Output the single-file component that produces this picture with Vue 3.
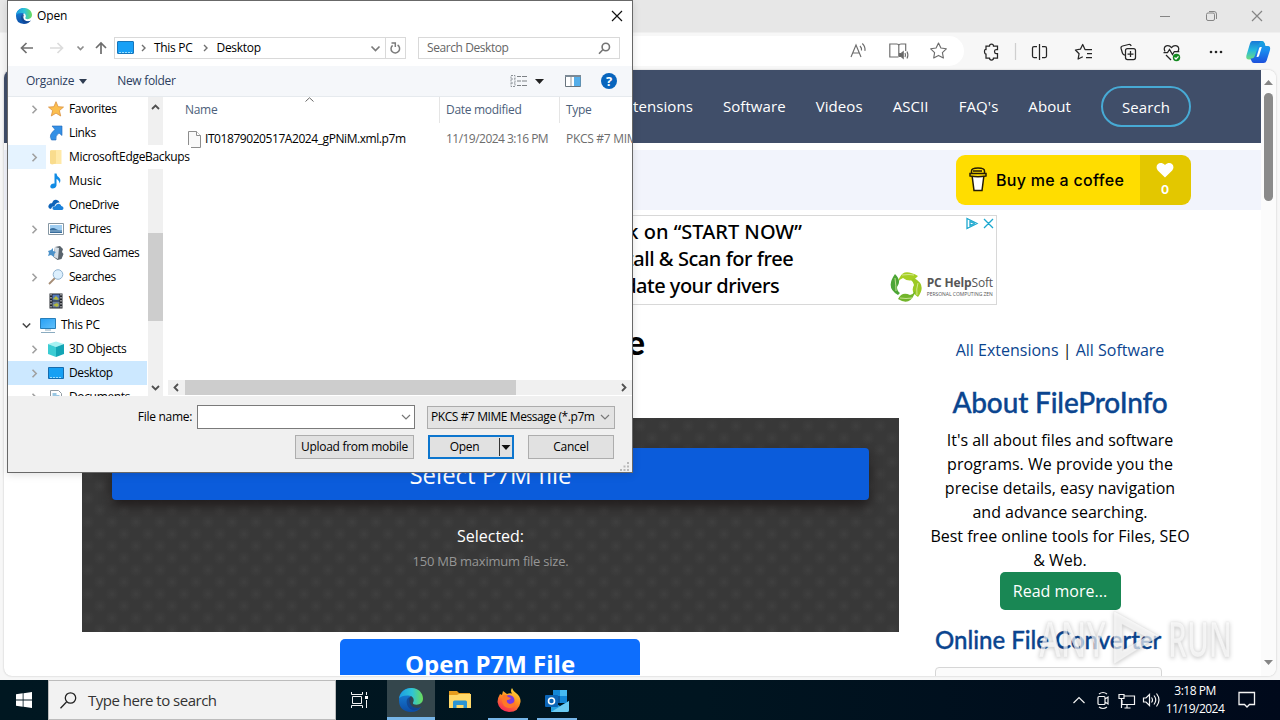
<script setup>
const tree = [
  { label: 'Favorites', icon: 'star', arrow: true },
  { label: 'Links', icon: 'link' },
  { label: 'MicrosoftEdgeBackups', icon: 'folder', arrow: true, state: 'hover' },
  { label: 'Music', icon: 'music', state: 'loose' },
  { label: 'OneDrive', icon: 'cloud' },
  { label: 'Pictures', icon: 'picture', arrow: true },
  { label: 'Saved Games', icon: 'games', state: 'tight' },
  { label: 'Searches', icon: 'search', arrow: true, state: 'tight' },
  { label: 'Videos', icon: 'video' },
  { label: 'This PC', icon: 'pc', arrow: true, state: 'root' },
  { label: '3D Objects', icon: 'cube', arrow: true },
  { label: 'Desktop', icon: 'desktop', arrow: true, state: 'selected' },
  { label: 'Documents', icon: 'doc', arrow: true },
]
const nav = ['Extensions', 'Software', 'Videos', 'ASCII', "FAQ's", 'About']
</script>

<template>
  <div class="screen">
    <svg class="defs" width="0" height="0">
      <defs>
        <linearGradient id="edgeA" x1="0" y1="0" x2="1" y2="0"><stop offset="0" stop-color="#1b9de2" /><stop offset=".55" stop-color="#2fc4d6" /><stop offset="1" stop-color="#6bdc58" /></linearGradient>
        <linearGradient id="edgeB" x1="0" y1="0" x2="0" y2="1"><stop offset="0" stop-color="#1a8ae0" /><stop offset="1" stop-color="#0c4da6" /></linearGradient>
        <linearGradient id="copA" x1="0" y1="0" x2="0" y2="1"><stop offset="0" stop-color="#1779d8" /><stop offset=".5" stop-color="#24b8dd" /><stop offset="1" stop-color="#6fdc80" /></linearGradient>
        <linearGradient id="copB" x1="0" y1="0" x2="0" y2="1"><stop offset="0" stop-color="#15a4d8" /><stop offset=".4" stop-color="#1a8ff0" /><stop offset="1" stop-color="#1c50dc" /></linearGradient>
        <linearGradient id="fox" x1=".8" y1="0" x2=".3" y2="1"><stop offset="0" stop-color="#ffe23e" /><stop offset=".5" stop-color="#ff8c1e" /><stop offset="1" stop-color="#f5245c" /></linearGradient>
        <linearGradient id="screenBlue" x1="0" y1="0" x2="1" y2="1"><stop offset="0" stop-color="#27a0f5" /><stop offset="1" stop-color="#62c0fa" /></linearGradient>
        <symbol id="edge" viewBox="0 0 24 24">
          <path d="M0 12C0 4 6 0 12 0v8q-3 2-1.500 7 2 5 7.500 5 3 0 4.500-1.500Q19 24 12 24 0 23.500 0 12Z" fill="url(#edgeB)" />
          <path d="M0 10.500C1.500 3.500 7-.2 13 .1 19.500.5 24 5.200 24 10.500c0 4-3 6.200-6.500 6.200-3 0-4.200-1.200-3.300-2.500C15.500 12 14.500 8 9.500 7.600 5 7.300 1.500 8.500 0 10.500Z" fill="url(#edgeA)" />
          <path d="M9 10c-3 3-1 11 5.500 12.300 3.500.3 6-1.300 7.600-3.300-3.600 1.700-8.600.9-10.200-2.300C10.800 14.500 11 12 12.500 10.500 11.500 9 10 9 9 10Z" fill="#123f86" opacity=".7" />
        </symbol>
      </defs>
    </svg>

    <div class="browser">
      <div class="titlebar">
        <svg width="122" height="32" viewBox="0 0 122 32" fill="none" stroke="#858585">
          <path d="M4 16.500h10M50.500 14.500q0-1.500 1.500-1.500h5q1.500 0 1.500 1.500v4.500q0 1.500-1.500 1.500h-5q-1.500 0-1.500-1.500zM53 11.500h5q2.500 0 2.500 2.500v5" /><path d="M96 11l10 10M106 11l-10 10" stroke-width="1.200" />
        </svg>
      </div>
      <div class="toolbar">
        <div class="address">
          <svg width="110" height="24" viewBox="0 0 110 24" fill="none" stroke="#6c6c6c" stroke-width="1.150">
            <path d="M2 18 7 6l5 12M3.700 14h6.600M11 7q2 2 1.500 4.500M13.300 4.500q3.200 3 2.600 7.300" />
            <path d="M49.500 18h-8.700V5h7q2 0 2 1.500Q50 5 52 5h4.700v7M49.800 6.500v11" /><path d="M50.500 14.500v3h1.700l2 1.700v-6.400l-2 1.700z" fill="#666" /><path d="M56 14q1 2 0 4M58 12.500q1.800 3.500 0 7" />
            <path d="m89.500 4 2.400 5 5.400.8-3.900 3.800 1 5.400-4.900-2.600-4.800 2.600.9-5.400-3.900-3.800 5.400-.8z" stroke-linejoin="round" />
          </svg>
        </div>
        <svg class="tools" width="300" height="32" viewBox="976 35 300 32" fill="none" stroke="#252525" stroke-width="1.250">
          <path d="M987 45h2.500q0-2 2-2t2 2h4v3.500h-1.500q-1.500 0-1.500 2t1.500 2h1.500V57h-4q0 2-2 2t-2-2H986v-4q-1.500 0-1.500-2.500t1.500-2V45z" />
          <path d="M1015.500 42v17" stroke="#cfcfcf" />
          <path d="M1037 45.500h-3q-1.500 0-1.500 1.500v8q0 1.500 1.500 1.500h3M1042 45.500h3q1.500 0 1.500 1.500v8q0 1.500-1.500 1.500h-3M1039.500 43v16" />
          <path d="M1086.500 48.500h-1.500l-2.300-5-2.300 4.700-5 .8 3.700 3.700-1 5.300 4.700-2.300M1085 48.500h7M1087 52.500h5M1086 56.500h6" stroke-linejoin="round" />
          <path d="M1126 54h-1q-2 0-2.600-2l-1.300-4.500q-.5-2 1.500-2.500l6-1.500q2-.4 2.600 1.500" /><rect x="1125.500" y="47.500" width="10" height="11" rx="2" /><path d="M1130.500 50v6M1127.500 53h6" />
          <path d="M1165 50.500q-2-4 1.300-5.600 3-1 5.200 1.700 2.200-2.700 5.200-1.700 3.300 1.600 1.300 5.600M1163.500 51.500h4l2-3 3 5 1.800-3h5M1166 54l5 5" /><circle cx="1176.500" cy="56.500" r="3.700" fill="#138a20" stroke="none" /><path d="m1174.500 56.500 1.500 1.500 2.500-2.700" stroke="#fff" />
          <g fill="#252525" stroke="none"><circle cx="1211" cy="51" r="1.300" /><circle cx="1216" cy="51" r="1.300" /><circle cx="1221" cy="51" r="1.300" /></g>
          <path d="M1252 40h10l3 3-2 6-5 0-3 8q-.5 1.500-3 1.500h-3q-3.500 0-2.600-4l3.600-12q.7-2.500 2-2.500z" fill="url(#copA)" stroke="none" />
          <path d="M1262 40q2 0 2.500 2l1 3h2.500q2.800 0 2 4l-3.300 10.500q-.8 2.500-3.200 2.500H1254q-2 0-2.500-2l-1-2.500h1q2.500 0 3.500-3l4-11.500q1-3 3-3z" fill="url(#copB)" stroke="none" /><path d="m1256.500 56 2.700-9q.3-1 1.400-1h1.200l-2.800 9q-.4 1-1.400 1z" fill="#fff" stroke="none" />
        </svg>
      </div>

      <div class="viewport">
        <div class="page">
          <header class="nav">
            <span v-for="item in nav" :key="item">{{ item }}</span>
            <button class="nav-search">Search</button>
          </header>
          <div class="strip">
            <div class="coffee">
              <div class="coffee-main">
                <svg width="20" height="28" viewBox="0 0 20 28" fill="#fff" stroke="#251d05" stroke-width="1.500"><path d="M4 9h12l-2 15.500H6z" /><path d="M2 7.500h16v2.500q-8 1.500-16 0zM3.500 5q0-3 6.500-3t6.500 3v2.500h-13zM5 5h9" fill="#fd0" /></svg>
                <span>Buy me a coffee</span>
              </div>
              <div class="coffee-count">
                <svg width="18" height="16" viewBox="0 0 18 16"><path d="M9 15.500 1.800 8.500C-2 4 3.500-2 9 3 14.500-2 20 4 16.200 8.500Z" fill="#fff" /></svg>
                <b>0</b>
              </div>
            </div>
          </div>

          <div class="ad">
            <div class="ad-text"><p>Click on “START NOW”</p><p>Install &amp; Scan for free</p><p>Update your drivers</p></div>
            <svg class="ad-mark" width="28" height="13" viewBox="0 0 28 13" fill="none" stroke="#1ca8cf" stroke-width="1.300"><path d="M1 1.500v10l10-5zM4 4.500v4l4-2zM18 2l9 9M27 2l-9 9" /></svg>
            <div class="brand">
              <svg width="32" height="34" viewBox="0 0 32 34">
                <path d="M10 8Q14-1 28 7q-7 8-15 2-3 1-5 4 0-3 2-5z" fill="#a6cf23" /><path d="M24 9q13 7 4 19-8-5-4-12-.5-3-3-5z" fill="#9bc925" />
                <path d="M24 26q-5 11-16 4 4-8 12-4 3-.5 5-4 .5 2-1 4z" fill="#72b52b" /><path d="M8 26Q-5 19 5 5q7 7 2 13 0 4 3 6z" fill="#4ca536" /><path d="M12 6q8-1 12 0M28 14q-2 6-1 12M22 29q-6 1-12 0M5 9q1 8 1 13" fill="none" stroke="#ddeea8" stroke-width=".8" />
              </svg>
              <div><div class="brand-name"><b>PC Help</b>Soft</div><div class="brand-sub">PERSONAL COMPUTING ZEN</div></div>
            </div>
          </div>

          <div class="columns">
            <main>
              <h1>Open P7M File Online</h1>
              <section class="drop">
                <button class="select">Select P7M file</button>
                <p class="selected-label">Selected:</p>
                <p class="limit">150 MB maximum file size.</p>
              </section>
              <button class="open-file">Open P7M File</button>
            </main>
            <aside>
              <p class="links"><a>All Extensions</a> | <a>All Software</a></p>
              <h2>About FileProInfo</h2>
              <p class="about">It's all about files and software<br>programs. We provide you the<br>precise details, easy navigation<br>and advance searching.<br>Best free online tools for Files, SEO<br>&amp; Web.</p>
              <button class="more">Read more...</button>
              <h3>Online File Converter</h3>
              <div class="converter"></div>
            </aside>
          </div>
        </div>
        <div class="page-scroll">
          <svg width="15" height="20" viewBox="0 0 15 20"><path d="M3 15h9L7.500 10z" fill="#858585" /></svg>
          <div class="page-thumb"></div>
          <svg width="15" height="20" viewBox="0 0 15 20"><path d="M3 5h9l-4.500 5z" fill="#858585" /></svg>
        </div>
      </div>
    </div>

    <svg class="watermark" width="204" height="70" viewBox="0 0 204 70">
      <g class="wm-shape">
        <text x="5" y="53" textLength="67" lengthAdjust="spacingAndGlyphs">ANY</text>
        <path d="m80 7 45 25-45 28zM88 20v27l24-14z" fill-rule="evenodd" />
        <text x="134" y="53" textLength="64" lengthAdjust="spacingAndGlyphs">RUN</text>
      </g>
    </svg>

    <div class="dialog">
      <div class="d-title">
        <svg width="16" height="16"><use href="#edge" /></svg><span>Open</span>
        <svg class="d-close" width="12" height="12" viewBox="0 0 12 12" stroke="#111" stroke-width="1.200"><path d="m1 1 10 10M11 1 1 11" /></svg>
      </div>
      <div class="d-nav">
        <svg class="arrows" width="95" height="22" viewBox="0 0 95 22" fill="none" stroke-width="1.700">
          <path d="M25 11H13.500M18.500 6l-5 5 5 5" stroke="#707070" /><path d="M42 11h12M49.500 6l5 5-5 5" stroke="#dcdcdc" /><path d="m69.500 9.500 3 3 3-3" stroke="#8c8c8c" /><path d="M93 17V6M88 11l5-5 5 5" stroke="#6d6d6d" />
        </svg>
        <div class="path">
          <svg width="17" height="14" viewBox="0 0 17 14"><rect x=".5" y=".5" width="16" height="12" rx=".5" fill="#18a0f6" stroke="#1876ba" /><path d="M2 11.500h13" stroke="#9be0ff" stroke-dasharray="2 1" /></svg>
          <svg class="crumb" width="5" height="8" viewBox="0 0 5 8"><path d="m1 1 3 3-3 3" fill="none" stroke="#707070" stroke-width="1.400" /></svg>
          <span>This PC</span>
          <svg class="crumb second" width="5" height="8" viewBox="0 0 5 8"><path d="m1 1 3 3-3 3" fill="none" stroke="#707070" stroke-width="1.400" /></svg>
          <span>Desktop</span>
          <svg class="path-end" width="36" height="20" viewBox="0 0 36 20" fill="none" stroke="#7b7b7b" stroke-width="1.700"><path d="m2.500 8.500 4 4 4-4" /><path d="M16.500 0v20" stroke="#d9d9d9" stroke-width="1" /><path d="M28.600 7a4.300 4.300 0 1 1-5 .3M22.500 5h3.800v4" stroke-width="1.500" /></svg>
        </div>
        <div class="d-search"><span>Search Desktop</span><svg width="13" height="13" viewBox="0 0 13 13" fill="none" stroke="#747474" stroke-width="1.600"><circle cx="7.800" cy="5" r="3.700" /><path d="m5 7.500-4 4.300" /></svg></div>
      </div>
      <div class="d-cmd">
        <span class="organize">Organize</span><svg width="8" height="5" viewBox="0 0 8 5"><path d="M0 0h8L4 5z" fill="#2f3d52" /></svg><span class="new-folder">New folder</span>
        <svg class="view" width="112" height="20" viewBox="0 0 112 20">
          <path d="M1 4.500h4v11H1zM1 8h4M1 12h4" fill="none" stroke="#8c9298" stroke-dasharray="2 1" /><path d="M7 5.500h4M12 5.500h5M7 10h4M12 10h5M7 14.500h4M12 14.500h5" stroke="#7d8185" /><path d="M25 8h9l-4.500 5z" fill="#222" />
          <path d="M55.500 4.500h15v11h-15z" fill="#fff" stroke="#69747e" /><path d="M55 4h16v2H55z" fill="#7c8a96" /><path d="M64 6h6.500v9H64z" fill="#55aee9" /><path d="M61 6v9" stroke="#999" />
          <circle cx="99" cy="10" r="8" fill="#0865bd" /><text x="99" y="15" text-anchor="middle" class="help">?</text>
        </svg>
      </div>

      <div class="d-body">
        <div class="tree">
          <div v-for="n in tree" :key="n.label" class="node" :class="n.state">
            <svg v-if="n.arrow" class="chev" width="9" height="9" viewBox="0 0 9 9" fill="none" stroke-width="1.600"><path v-if="n.state === 'root'" d="m.8 2.500 3.700 3.700L8.200 2.500" stroke="#484848" /><path v-else d="m2.500.8 3.700 3.700-3.700 3.700" stroke="#a0a0a0" /></svg>
            <svg class="n-icon" width="16" height="16" viewBox="0 0 16 16">
              <path v-if="n.icon === 'star'" d="m8 .7 2.100 5 5.400.4-4.100 3.500 1.300 5.400L8 12.100 3.300 15l1.300-5.400L.5 6.100l5.400-.4z" fill="#fcbf4e" stroke="#d99140" stroke-width=".8" />
              <path v-else-if="n.icon === 'link'" d="M4 1h10v9.500l-3-2.500q-4 3-3 7H3.500Q0 10 7 4.500z" fill="#3490e5" stroke="#1c66b8" stroke-width=".6" />
              <g v-else-if="n.icon === 'folder'"><path d="M3 1h10.500v14H3z" fill="#ffe9a8" /><path d="M2 1.500h6v13l-4 1-2-1z" fill="#f9dc8d" /></g>
              <path v-else-if="n.icon === 'music'" d="M6.500.5h2q0 2 2.500 4t.5 6q0-3-3-4.500v6.500q-.7 3-4 3-3-.5-2-3t4-2z" fill="#118ce5" />
              <g v-else-if="n.icon === 'cloud'"><path d="M3 12Q-1 11 1 7.700 2 6 4 6.300 5.500 2 9 3q2 .5 2.700 2.500Q8 5 6.500 9 4 9 3 12z" fill="#0d63b9" /><path d="M6 13q-2-.5-1.500-2.300T7 9.500Q8.500 6.200 11.500 7q1.500.7 1.800 2 2.700.5 2 3-.5 1-1.500 1z" fill="#1a80d9" /></g>
              <g v-else-if="n.icon === 'picture'"><path d="M.5 2.500h15v11H.5z" fill="#fff" stroke="#8697a3" /><path d="M2 4h12v8H2z" fill="#9fcdf1" /><path d="M2 8q3-2 6 0t6 1v3H2z" fill="#386d9c" /><path d="M2 10h12" stroke="#9dc2dc" /></g>
              <g v-else-if="n.icon === 'games'"><path d="m7 2 5-1 3 3-1 3 1.500 2-2 5-4 1-4-3z" fill="#59636c" /><path d="m7 2 4 1-1 11-4-2z" fill="#d4dde5" /><path d="m0 6 3-1 2-2v3l3 1-2 2v3l-3-2-3 1 1-3z" fill="#4b91c9" /></g>
              <g v-else-if="n.icon === 'search'"><path d="m7 9-6 6" stroke="#a58d76" stroke-width="1.800" /><circle cx="10" cy="5.500" r="4.800" fill="#dceffd" stroke="#91b3d0" /></g>
              <g v-else-if="n.icon === 'video'"><path d="M1.500.5h13v15h-13z" fill="#23262c" /><path d="M4.500 1.500h7v6h-7z" fill="#557abd" /><path d="M4.500 8.500h7v6h-7z" fill="#6e81a0" /><path d="m5 6 3-3 3 3-2 1zM5 12l4-2 2 2-2 2z" fill="#b5ba3b" /><path d="M3 1v14M13 1v14" stroke="#eee" stroke-dasharray="1.500 1.500" /></g>
              <g v-else-if="n.icon === 'pc'"><path d="M.5 1.500h15v10H.5z" fill="url(#screenBlue)" stroke="#277eb9" /><path d="M5 13h6M1 15.500h14" stroke="#8aabc0" /></g>
              <g v-else-if="n.icon === 'cube'"><path d="m0 3 8-2.500L16 3 8 6z" fill="#a6f2f2" /><path d="m0 3 8 3v10l-8-3z" fill="#3bccd3" /><path d="m8 6 8-3v10l-8 3z" fill="#13a5b5" /></g>
              <g v-else-if="n.icon === 'desktop'"><path d="M.5 2.500h15v11H.5z" fill="#16a0f4" stroke="#176cae" /><path d="M2 12.500h12" stroke="#96dbff" stroke-dasharray="2 1" /></g>
              <g v-else><path d="M2.500 1.500h8l3 3v11h-11z" fill="#fff" stroke="#929ba2" /><path d="M4.500 5h4M4.500 7h7M5 9h3v3H5zM10 9v4" stroke="#358ec5" fill="none" /></g>
            </svg>
            <span>{{ n.label }}</span>
          </div>
        </div>
        <div class="v-scroll">
          <svg width="9" height="6" viewBox="0 0 9 6"><path d="m1 5 3.500-3.500L8 5" fill="none" stroke="#505050" stroke-width="1.800" /></svg>
          <div class="v-thumb"></div>
          <svg width="9" height="6" viewBox="0 0 9 6"><path d="m1 1 3.500 3.500L8 1" fill="none" stroke="#505050" stroke-width="1.800" /></svg>
        </div>
        <div class="files">
          <div class="cols"><span>Name</span><span>Date modified</span><span>Type</span>
            <svg class="sort" width="9" height="5" viewBox="0 0 9 5"><path d="M.5 4.500 4.500.8l4 3.700" fill="none" stroke="#666" /></svg>
          </div>
          <div class="file">
            <svg width="13" height="17" viewBox="0 0 13 17"><path d="M.5.5h8l4 4v12H.5z" fill="#f9f9f9" stroke="#8d8d8d" /><path d="M8.500.5v4h4" fill="#fff" stroke="#8d8d8d" /></svg>
            <span class="f-name">IT01879020517A2024_gPNiM.xml.p7m</span><span class="f-date">11/19/2024 3:16 PM</span><span class="f-type">PKCS #7 MIME</span>
          </div>
          <div class="h-scroll">
            <svg width="6" height="9" viewBox="0 0 6 9"><path d="M5 1 1.500 4.500 5 8" fill="none" stroke="#505050" stroke-width="1.800" /></svg>
            <div class="h-thumb"></div>
            <svg width="6" height="9" viewBox="0 0 6 9"><path d="m1 1 3.500 3.500L1 8" fill="none" stroke="#505050" stroke-width="1.800" /></svg>
          </div>
        </div>
      </div>

      <div class="d-foot">
        <div class="f-row">
          <label>File name:</label>
          <div class="combo"><svg width="10" height="6" viewBox="0 0 10 6"><path d="m1 1 4 4 4-4" fill="none" stroke="#777" stroke-width="1.200" /></svg></div>
          <div class="filter"><span>PKCS #7 MIME Message (*.p7m</span><svg width="10" height="6" viewBox="0 0 10 6"><path d="m1 1 4 4 4-4" fill="none" stroke="#777" stroke-width="1.200" /></svg></div>
        </div>
        <div class="f-row buttons">
          <button class="upload">Upload from mobile</button>
          <button class="open"><span>Open</span><svg width="13" height="20" viewBox="0 0 13 20"><path d="M.5 1v18" stroke="#333" /><path d="M2.500 8h9L7 13z" fill="#111" /></svg></button>
          <button class="cancel">Cancel</button>
        </div>
        <svg class="grip" width="10" height="10" viewBox="0 0 10 10" fill="#b9b9b9"><path d="M7 0h2v2H7zM7 3.500h2v2H7zM3.500 3.500h2v2h-2zM7 7h2v2H7zM3.500 7h2v2h-2zM0 7h2v2H0z" /></svg>
      </div>
    </div>

    <footer class="taskbar">
      <div class="start"><svg width="16" height="16" viewBox="0 0 16 16" fill="#fff"><path d="M0 2.200 6.700 1.300v6.300H0zM7.500 1.200 16 0v7.600H7.500zM0 8.400h6.700v6.300L0 13.800zM7.500 8.400H16V16l-8.500-1.200z" /></svg></div>
      <div class="t-search"><svg width="17" height="17" viewBox="0 0 17 17" fill="none" stroke="#222" stroke-width="1.300"><circle cx="10.500" cy="6" r="5.200" /><path d="m6.500 10-6 6.200" /></svg><span>Type here to search</span></div>
      <div class="tile"><svg width="18" height="16" viewBox="0 0 18 16" fill="none" stroke="#f2f2f2"><path d="M1.500 4.500h9v7h-9zM.5 0v2.500h11V0M.5 16v-2.500h11V16M15.500 0v3M15.500 8v8" /><path d="M14 4h3v3h-3z" fill="#fff" stroke="none" /></svg></div>
      <div class="tile active"><svg width="24" height="24"><use href="#edge" /></svg></div>
      <div class="tile"><svg width="22" height="20" viewBox="0 0 22 20"><path d="M0 1h8l2 2h11v14H0z" fill="#e59c1e" /><path d="M0 5h8l2-1h12v14H0z" fill="#ffd869" /><path d="M4 12q0-1.500 1.500-1.500h11Q18 10.500 18 12v6h-3.500v-3h-7v3H4z" fill="#2c94d4" /></svg></div>
      <div class="tile running"><svg width="24" height="24" viewBox="0 0 24 24"><path d="M3 6l2 1 1-4 4 3q2-1 5-.5Q13 3 15 0q1 3 4 5 5 4 4.500 9Q22 24 12 24 2 23 .5 14 .5 10 3 6z" fill="url(#fox)" /><circle cx="12" cy="12.500" r="5.500" fill="#7a3be0" /><path d="M6 7q3-1 5 2l3 1q-1 2-4 2-1 3 3 4 4-.5 5-4 1 8-6 8-7-1-7-8z" fill="#ff7828" /></svg></div>
      <div class="tile running"><svg width="25" height="23" viewBox="0 0 25 23"><path d="M8 1h14v13H8z" fill="#1387d7" /><path d="M15 1h7v6h-7z" fill="#45baf2" /><path d="M7 7h8v7H7z" fill="#0a5aa5" /><path d="M6 12l9 5 9-5v9q0 2-2 2H6z" fill="#249fdf" /><path d="m6 23 18-11v9q0 2-2 2z" fill="#6bcbf3" /><rect y="6" width="13" height="12" rx="1" fill="#0b65b7" /><circle cx="6.500" cy="12" r="3" fill="none" stroke="#fff" stroke-width="1.600" /></svg></div>
      <div class="tray">
        <svg width="90" height="20" viewBox="1072 690 90 20" fill="none" stroke="#f3f3f3" stroke-width="1.200"><path d="m1073.500 703 5.500-5.500 5.500 5.500M1099 696.500h5q1 0 1 1v6q0 1-1 1h-5q-1 0-1-1v-6q0-1 1-1zM1105 699l3-2v7l-3-2M1099 694q4-3 8 0M1099 707q4 3 8 0M1124 696h10.500v8.500H1122V700M1127 705v3M1124.500 708h6M1119 694.500h5v4h-5zM1121.500 699v9M1143.500 698v4h2.500l3.500 3.500v-11l-3.500 3.500zM1151.500 697.500q2 2.500 0 5M1154 695.500q3.500 4.500 0 9M1156.500 693.500q5 6.500 0 13" /></svg>
        <div class="clock"><span>3:18 PM</span><span>11/19/2024</span></div>
        <svg width="18" height="18" viewBox="0 0 18 18" fill="none" stroke="#f3f3f3" stroke-width="1.300"><path d="M1 1.500h15.500v12h-5L9 16l-2.500-2.500H1z" /></svg>
      </div>
    </footer>
  </div>
</template>

<style>
body { margin: 0; overflow: hidden; }
</style>

<style scoped>
.screen { position: relative; width: 1280px; height: 720px; overflow: hidden; font-family: "Open Sans", "Noto Sans", sans-serif; color: #000; background: #f0f4f7; }
.screen * { box-sizing: border-box; }
.defs { position: absolute; }
svg { flex: none; display: block; }
h1, h2, h3, p { margin: 0; }
button { font: inherit; letter-spacing: inherit; padding: 0; border: 0; }

.browser { height: 680px; display: flex; flex-direction: column; background: #f7f7f7; }
.titlebar { height: 32px; background: #e7e7e7; display: flex; justify-content: flex-end; padding-right: 2px; }
.toolbar { height: 38px; display: flex; align-items: center; justify-content: flex-end; border-top: 1px solid #efefef; }
.address { width: 952px; height: 30px; margin-right: 12px; margin-top: -1px; border-radius: 15px; background: #fff; display: flex; justify-content: flex-end; align-items: center; padding-right: 5px; }
.tools { margin-right: 4px; }
.viewport { height: 606px; margin: 0 4px 4px; display: flex; background: #fff; border-radius: 8px; overflow: hidden; box-shadow: 0 0 2px #bbb; }
.page { width: 1257px; height: 606px; overflow: hidden; }
.page-scroll { width: 15px; background: #fbfbfb; display: flex; flex-direction: column; align-items: center; }
.page-thumb { width: 9px; height: 108px; margin-top: 3px; margin-bottom: auto; border-radius: 5px; background: #8a8a8a; }
.page-scroll svg:last-child { margin-bottom: 1px; }

.nav { height: 73px; background: #404e69; display: flex; align-items: center; justify-content: flex-end; gap: 30px; padding-right: 70px; color: #fff; font-size: 15px; letter-spacing: .08px; }
.nav span { margin-top: -1px; }
.nav-search { width: 90px; height: 41px; border: 2px solid #47aad5; border-radius: 21px; background: transparent; color: #fff; }
.strip { margin-top: 7px; height: 60px; background: #f2f4fc; display: flex; justify-content: flex-end; padding: 5px 70px 0 0; }
.coffee { display: flex; width: 235px; height: 50px; border-radius: 9px; overflow: hidden; }
.coffee-main { width: 184px; background: #fd0; display: flex; align-items: center; gap: 8px; padding-left: 12px; font: 500 16px Inter, sans-serif; letter-spacing: .3px; white-space: nowrap; }
.coffee-count { flex: 1; background: #e3c700; color: #fff; display: flex; flex-direction: column; align-items: center; padding: 7px 1px 0 0; font: 12px/18px Inter, sans-serif; }
.coffee-count b { margin-top: 3px; }

.ad { position: relative; width: 728px; height: 90px; margin: 5px 0 0 265px; border: 1px solid #d8d8d8; display: flex; justify-content: space-between; }
.ad-text { padding-left: 324px; padding-top: 2px; font: 500 20px/27px "Noto Sans", sans-serif; white-space: nowrap; }
.ad-text p:nth-child(2) { padding-left: 4px; letter-spacing: -.45px; }
.ad-text p:nth-child(3) { padding-left: 4px; letter-spacing: -.5px; }
.ad-mark { position: absolute; top: 1px; right: 2px; }
.brand { align-self: flex-end; display: flex; align-items: center; gap: 5px; padding: 0 3px 1px 0; color: #565656; white-space: nowrap; }
.brand-name { font: 12px/16px "Open Sans", sans-serif; letter-spacing: -.15px; }
.brand-sub { font: 5px/6px "Open Sans", sans-serif; letter-spacing: -.03px; }

.columns { display: flex; padding-left: 78px; }
main { width: 817px; height: 380px; }
h1 { margin-top: 17px; height: 96px; width: 563px; text-align: right; font: 900 34px/40px Lato, sans-serif; white-space: nowrap; }
.drop { height: 214px; padding-top: 30px; text-align: center; color: #fff; background-color: #383838; background-image: radial-gradient(circle, #3f3f3f 0, transparent 7px), radial-gradient(circle, #3f3f3f 0, transparent 7px); background-size: 24px 24px; background-position: 6px 8px, 18px 20px; }
.select { display: block; width: 757px; height: 52px; margin: 0 auto; border-radius: 4px; background: #0b5cdb; color: #fff; font-size: 24px; box-shadow: 0 6px 12px #201c1c; }
.selected-label { margin-top: 24px; font-size: 16px; line-height: 24px; }
.limit { font-size: 13px; line-height: 20px; margin-top: 3px; color: #969696; letter-spacing: -.24px; }
.open-file { display: block; width: 300px; height: 36px; margin: 7px 0 0 258px; padding-top: 0; line-height: 34px; background: #0d6efd; border-radius: 5px 5px 0 0; color: #fff; font-size: 24px; font-weight: 700; padding-top: 8px; }
aside { width: 262px; margin-left: 30px; text-align: center; font-size: 16px; line-height: 24px; white-space: nowrap; }
.links { margin-top: 33px; color: #111; }
.links a { color: #0b458f; }
h2 { margin-top: 21px; font: 500 28px/38px Lato, sans-serif; letter-spacing: -.15px; color: #0b458f; -webkit-text-stroke: .35px #0b458f; }
.about { margin-top: 7px; }
.more { display: block; width: 121px; height: 38px; margin: 0 auto; border-radius: 5px; background: #198754; color: #fff; }
h3 { width: 227px; margin: 14px 0 0 6px; text-align: left; font: 500 24px/32px Lato, sans-serif; color: #0b458f; -webkit-text-stroke: .35px #0b458f; }
.converter { width: 227px; height: 40px; margin: 11px 0 0 6px; border: 1px solid #d6d6d6; border-radius: 4px; background: #fbfbfb; }

.watermark { position: absolute; left: 1034px; top: 604px; overflow: visible; }
.wm-shape { fill: rgba(255,255,255,.68); stroke: rgba(225,225,225,.6); stroke-width: .7; filter: drop-shadow(0 1px 2px rgba(0,0,0,.3)); }
.wm-shape text { font: 600 48px "Open Sans", sans-serif; }

.dialog { position: absolute; left: 7px; top: 0; width: 626px; height: 473px; border: 1px solid #686868; background: #fff; font-size: 12px; line-height: 16px; letter-spacing: -.3px; display: flex; flex-direction: column; white-space: nowrap; overflow: hidden; box-shadow: 0 2px 8px rgba(0,0,0,.12); }
.d-title { height: 30px; display: flex; align-items: center; padding: 0 9px 0 8px; gap: 5px; }
.d-close { margin-left: auto; }
.d-title span { letter-spacing: -.15px; }
.d-nav { height: 35px; padding-top: 6px; display: flex; }
.arrows { width: 95px; margin-right: 11px; overflow: visible; }
.path { width: 292px; height: 22px; border: 1px solid #d9d9d9; display: flex; align-items: center; padding-left: 2px; margin-right: 12px; }
.path .crumb { margin: 0 8px 0 7px; }
.path .crumb.second { margin-left: 10px; margin-right: 9px; }
.path-end { margin-left: auto; }
.d-search { width: 202px; height: 22px; border: 1px solid #d9d9d9; display: flex; align-items: center; justify-content: space-between; padding: 0 8px; color: #666; letter-spacing: -.42px; }
.d-cmd { height: 31px; background: #f5f7fa; border-bottom: 1px solid #e6eaee; display: flex; align-items: center; padding-left: 18px; color: #2c3e5f; }
.d-cmd .organize { margin-right: 5px; letter-spacing: -.25px; }
.new-folder { margin-left: 30px; }
.view { margin-left: auto; margin-right: 10px; }
.help { font: 700 13px "Open Sans", sans-serif; fill: #fff; }
.d-body { height: 299px; display: flex; overflow: hidden; }
.tree { width: 140px; position: relative; z-index: 1; }
.node { height: 24px; width: 139px; display: grid; grid-template-columns: 38px 23px auto; align-items: center; justify-content: start; }
.chev { grid-column: 1; margin-left: 22px; }
.n-icon { grid-column: 2; margin-left: 2px; }
.node span { grid-column: 3; letter-spacing: -.35px; }
.node.root { grid-template-columns: 32px 21px auto; }
.node.root .chev { margin-left: 14px; }
.node.root .n-icon { margin-left: 0; }
.node.root span { letter-spacing: -.25px; }
.node.selected { background: #cce8ff; }
.node.loose span { letter-spacing: -.05px; }
.node.tight span { letter-spacing: -.47px; }
.node.hover { width: 183px; background: linear-gradient(90deg, #e5f3ff 38px, #fff 38px); }
.node.hover span { letter-spacing: -.32px; }
.v-scroll { width: 15px; background: #f0f0f0; display: flex; flex-direction: column; align-items: center; padding: 7px 0 5px; }
.v-thumb { width: 15px; height: 88px; margin-top: 123px; margin-bottom: auto; background: #cdcdcd; }
.files { flex: 1; margin-left: 5px; min-width: 0; display: flex; flex-direction: column; overflow: hidden; }
.cols { position: relative; height: 26px; flex: none; display: flex; align-items: center; color: #4c607a; }
.cols span { height: 26px; line-height: 26px; border-right: 1px solid #e5e5e5; padding-left: 6px; width: 120px; flex: none; }
.cols span:first-child { width: 272px; padding-left: 17px; }
.cols span:nth-child(3) { border: 0; }
.sort { position: absolute; left: 137px; top: 0; }
.file { height: 24px; margin-top: 4px; padding-left: 20px; display: flex; align-items: center; flex: none; }
.f-name { flex: none; width: 245px; padding-left: 4px; letter-spacing: -.43px; }
.f-date, .f-type { flex: none; color: #6d6d6d; }
.f-date { width: 120px; letter-spacing: -.53px; }
.h-scroll { height: 15px; margin-top: auto; margin-bottom: 1px; display: flex; align-items: center; justify-content: space-between; background: #f0f0f0; padding: 0 5px; }
.h-thumb { width: 331px; height: 15px; margin-left: 6px; margin-right: auto; background: #cdcdcd; }
.d-foot { position: relative; flex: 1; background: #f0f0f0; padding-top: 9px; }
.f-row { display: flex; align-items: center; }
label { width: 184px; margin-right: 5px; text-align: right; }
.combo { width: 218px; height: 24px; border: 1px solid #7a7a7a; background: #fff; margin-right: 12px; display: flex; align-items: center; justify-content: flex-end; padding-right: 3px; }
.filter { width: 188px; height: 23px; border: 1px solid #acacac; background: #e3e3e3; display: flex; align-items: center; justify-content: space-between; padding: 0 4px 0 3px; }
.filter span { letter-spacing: -.42px; }
.buttons { margin-top: 6px; padding-left: 287px; }
.buttons button { height: 24px; background: #e1e1e1; border: 1px solid #adadad; }
.buttons .upload { width: 119px; margin-right: 14px; }
.buttons .open { width: 86px; border: 2px solid #0d76ce; margin-right: 14px; display: flex; align-items: center; }
.open span { flex: 1; }
.buttons .cancel { width: 86px; }
.grip { position: absolute; right: 2px; bottom: 0; }

.taskbar { height: 40px; display: flex; background: linear-gradient(90deg, #001721, #001520 55%, #00091b); color: #fff; }
.start, .tile { width: 48px; display: flex; align-items: center; justify-content: center; }
.t-search { width: 288px; background: #f2f2f2; border: 1px solid #bcbcbc; display: flex; align-items: center; padding-left: 11px; gap: 11px; color: #333; font-size: 15px; letter-spacing: -.5px; }
.tile { width: 49px; }
.tile:nth-child(3) { width: 51px; padding-right: 3px; }
.active { width: 48px; background: #34464c; border-bottom: 3px solid #76b5e8; padding-top: 2px; }
.running { position: relative; }
.running::after { content: ""; position: absolute; left: 4px; right: 5px; bottom: 0; height: 2px; background: #76b5e8; }
.tray { margin-left: auto; display: flex; align-items: center; padding-right: 24px; }
.clock { width: 66px; margin: 0 10px 0 0; display: flex; flex-direction: column; align-items: center; font-size: 12px; line-height: 18px; letter-spacing: -.5px; }
</style>
